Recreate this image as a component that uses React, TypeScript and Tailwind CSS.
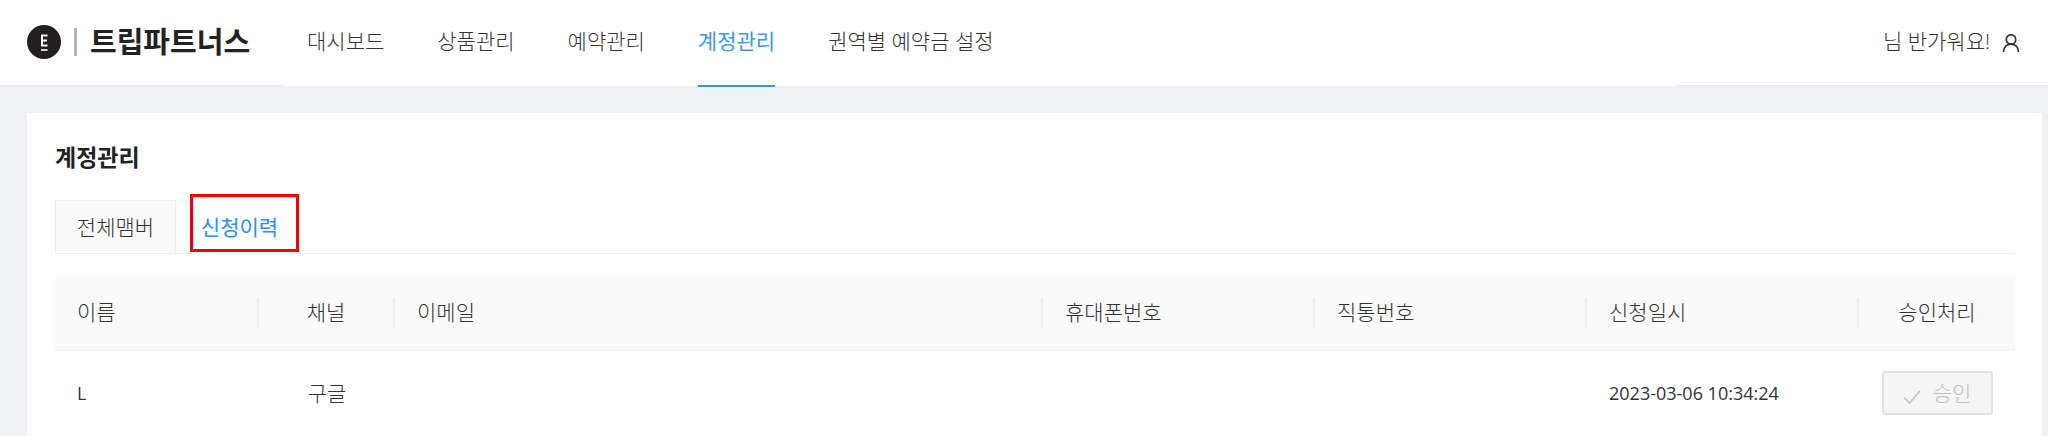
import { clsx } from "clsx";

const NAV_ITEMS = [
    { label: "대시보드", href: "#dashboard" },
    { label: "상품관리", href: "#products" },
    { label: "예약관리", href: "#reservations" },
    { label: "계정관리", href: "#accounts", active: true },
    { label: "권역별 예약금 설정", href: "#deposits" },
];

const COLUMNS = [
    { label: "이름", width: "w-[204px]" },
    { label: "채널", width: "w-[136px]", center: true },
    { label: "이메일", width: "" },
    { label: "휴대폰번호", width: "w-[272px]" },
    { label: "직통번호", width: "w-[272px]" },
    { label: "신청일시", width: "w-[272px]" },
    { label: "승인처리", width: "w-[156px]", center: true },
];

const ROWS = [{ name: "L", channel: "구글", email: "", mobile: "", direct: "", date: "2023-03-06 10:34:24" }];

function LogoMark() {
    return (
        <svg viewBox="0 0 34 34" className="size-[34px]" aria-hidden="true">
            <circle cx="17" cy="17" r="17" fill="#231f20" />
            <path d="M15 9.500v12M14 10.500h6.500M14 15.500h6M14 20.500h6.500" stroke="#fff" strokeWidth="2" fill="none" />
            <path d="M14 25h6.500" stroke="#fff" strokeWidth="1.600" />
        </svg>
    );
}

function UserIcon() {
    return (
        <svg viewBox="0 0 18 18" className="mt-1 h-[18px] w-[18px]" fill="none" stroke="#333" strokeWidth="1.700" aria-hidden="true">
            <circle cx="9" cy="5.500" r="4.700" />
            <path d="M1.500 18C1.500 13 5 10.200 9 10.200S16.500 13 16.500 18" />
        </svg>
    );
}

function CheckIcon() {
    return (
        <svg viewBox="0 0 18 14" className="mt-2 h-[14px] w-[18px]" fill="none" stroke="currentColor" strokeWidth="1.600" aria-hidden="true">
            <path d="M1 7.500L6.500 13L17 1" />
        </svg>
    );
}

function Header() {
    return (
        <header className="flex h-[86px] bg-white">
            <div className="flex w-[282px] shrink-0 items-center border-b border-[#e9eaed] pb-[2px] pl-[27px]">
                <LogoMark />
                <span className="mx-[13px] h-7 w-[3px] bg-[#b5b5b5]" />
                <span className="whitespace-nowrap text-[29px] font-bold leading-none text-[#222]">트립파트너스</span>
            </div>
            <nav className="flex flex-1 gap-[53px] whitespace-nowrap pl-[25px]">
                {NAV_ITEMS.map((item) => (
                    <a
                        key={item.href}
                        href={item.href}
                        className={clsx(
                            "flex h-[87px] items-center border-b-2 pb-[3px]",
                            item.active ? "border-[#3398db] font-normal text-[#389bf5]" : "border-transparent"
                        )}
                    >
                        {item.label}
                    </a>
                ))}
            </nav>
            <div className="flex w-[370px] shrink-0 items-center justify-end gap-3 border-b border-[#e3e4e7] pb-[3px] pr-7">
                <span>님 반가워요!</span>
                <UserIcon />
            </div>
        </header>
    );
}

function Tabs() {
    return (
        <div role="tablist" className="flex h-[54px] border-b border-[#eee]">
            <button role="tab" aria-selected={false} className="w-[121px] border border-b-0 border-[#eee] bg-[#fafafa]">
                전체맴버
            </button>
            <button
                role="tab"
                aria-selected={true}
                className="relative ml-[3px] w-[120px] border-l border-t border-[#f7f7f7] bg-white font-normal text-[#2590fa]"
            >
                신청이력
                <span className="absolute -top-[7px] left-[10px] h-[58px] w-[109px] border-[3px] border-[#f90000]" />
            </button>
        </div>
    );
}

function MemberTable() {
    return (
        <table className="mt-[22px] w-full table-fixed">
            <thead>
                <tr className="h-[74px] border-b-2 border-[#f5f5f5] bg-[#fafafa]">
                    {COLUMNS.map((col, i) => (
                        <th key={col.label} scope="col" className={clsx("p-0 font-light", col.width)}>
                            <div
                                className={clsx(
                                    "flex h-[30px] items-center px-[22px] pb-[2px]",
                                    col.center && "justify-center",
                                    i < COLUMNS.length - 1 && "border-r-2 border-[#ededed]"
                                )}
                            >
                                {col.label}
                            </div>
                        </th>
                    ))}
                </tr>
            </thead>
            <tbody>
                {ROWS.map((row) => (
                    <tr key={row.date} className="h-[85px]">
                        <td className="px-[22px] text-lg font-normal">{row.name}</td>
                        <td className="text-center">{row.channel}</td>
                        <td className="px-[22px]">{row.email}</td>
                        <td className="px-[22px]">{row.mobile}</td>
                        <td className="px-[22px]">{row.direct}</td>
                        <td className="px-[22px] text-lg font-normal">{row.date}</td>
                        <td className="text-center">
                            <button
                                disabled
                                className="inline-flex h-[44px] w-[111px] items-center justify-center gap-3 rounded-[3px] border-2 border-[#e2e2e2] bg-[#f5f5f5] align-middle text-[#c0c0c0]"
                            >
                                <CheckIcon />
                                승인
                            </button>
                        </td>
                    </tr>
                ))}
            </tbody>
        </table>
    );
}

export default function App() {
    return (
        <div className="flex min-h-screen flex-col bg-[#eff1f5] font-['Open_Sans','Noto_Sans_CJK_KR',sans-serif] text-[21px] font-light leading-7 text-[#333]">
            <Header />
            <main className="ml-[27px] mr-[6px] mt-[27px] flex-1 bg-white pl-7 pr-[27px] pt-[30px]">
                <h1 className="mb-[29px] text-[23px] font-bold text-[#222]">계정관리</h1>
                <Tabs />
                <MemberTable />
            </main>
        </div>
    );
}
